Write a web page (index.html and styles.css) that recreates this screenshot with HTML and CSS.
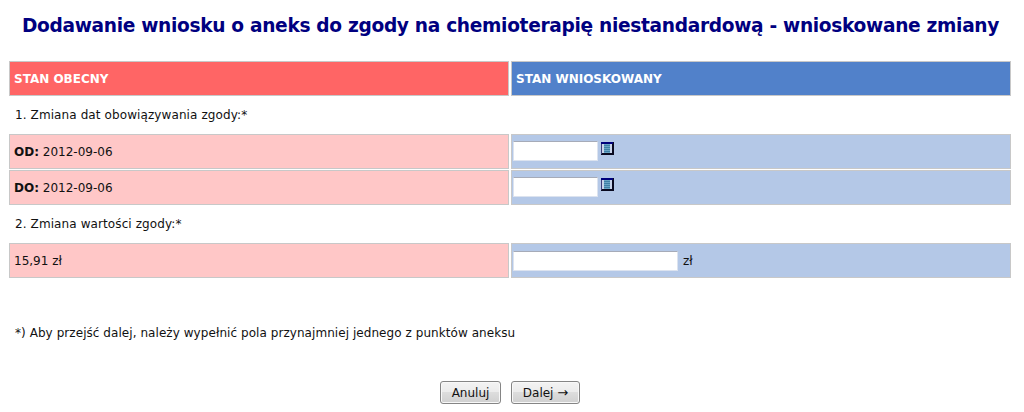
FILE: index.html
```html
<!DOCTYPE html>
<html lang="pl">
<head>
    <meta charset="UTF-8">
    <meta name="viewport" content="width=device-width, initial-scale=1.0">
    <title>Dodawanie wniosku o aneks</title>
    <link rel="stylesheet" href="styles.css">
</head>
<body>
    <h1 class="title"><span>Dodawanie wniosku o aneks do zgody na chemioterapię niestandardową - wnioskowane zmiany</span></h1>

    <form action="#" method="post">
        <table class="changes">
            <tr class="head">
                <th class="current"><span>STAN OBECNY</span></th>
                <th class="requested"><span>STAN WNIOSKOWANY</span></th>
            </tr>
            <tr class="section">
                <td colspan="2"><span>1. Zmiana dat obowiązywania zgody:*</span></td>
            </tr>
            <tr>
                <td class="current"><b>OD:</b> <span>2012-09-06</span></td>
                <td class="requested">
                    <div class="field">
                        <input type="text" class="date" name="date_from">
                        <svg class="calendar" width="13" height="13" viewBox="0 0 13 13" shape-rendering="crispEdges">
                            <rect width="13" height="13" fill="#0a0a20"/>
                            <path d="M0 0H12V2H0z" fill="#00007c"/>
                            <path d="M0 2H1V12H0z" fill="#3c3c78"/>
                            <rect x="1" y="2" width="10" height="9" fill="#c9d4ea"/>
                            <rect x="3" y="2" width="6" height="9" fill="#69a5c4"/>
                            <path d="M3 3H9V4H3zM3 5H9V6H3zM3 7H9V8H3zM3 9H9V10H3z" fill="#3f7fa6"/>
                        </svg>
                    </div>
                </td>
            </tr>
            <tr>
                <td class="current"><b>DO:</b> <span>2012-09-06</span></td>
                <td class="requested">
                    <div class="field">
                        <input type="text" class="date" name="date_to">
                        <svg class="calendar" width="13" height="13" viewBox="0 0 13 13" shape-rendering="crispEdges">
                            <rect width="13" height="13" fill="#0a0a20"/>
                            <path d="M0 0H12V2H0z" fill="#00007c"/>
                            <path d="M0 2H1V12H0z" fill="#3c3c78"/>
                            <rect x="1" y="2" width="10" height="9" fill="#c9d4ea"/>
                            <rect x="3" y="2" width="6" height="9" fill="#69a5c4"/>
                            <path d="M3 3H9V4H3zM3 5H9V6H3zM3 7H9V8H3zM3 9H9V10H3z" fill="#3f7fa6"/>
                        </svg>
                    </div>
                </td>
            </tr>
            <tr class="section">
                <td colspan="2"><span>2. Zmiana wartości zgody:*</span></td>
            </tr>
            <tr>
                <td class="current"><span>15,91 zł</span></td>
                <td class="requested">
                    <div class="field">
                        <input type="text" class="amount" name="amount">
                        <span class="unit">zł</span>
                    </div>
                </td>
            </tr>
        </table>

        <p class="note">*) Aby przejść dalej, należy wypełnić pola przynajmniej jednego z punktów aneksu</p>

        <div class="buttons">
            <button type="button" class="cancel">Anuluj</button>
            <button type="submit" class="next">Dalej <span class="arrow">→</span></button>
        </div>
    </form>
</body>
</html>
```
FILE: styles.css
```css
/* Global styles */
body {
    font-family: Verdana, "DejaVu Sans", sans-serif;
    font-size: 12px;
    margin: 0;
    background-color: #fff;
    color: #111;
}

.title {
    height: 24px;
    margin: 14px 0 22px;
    padding-right: 3px;
    font-size: 18.6px;
    line-height: 24px;
    letter-spacing: -0.32px;
    text-align: center;
    white-space: nowrap;
    color: #000080; /* Navy */
}

/* Table styles */
.changes {
    width: 1006px;
    margin-left: 7px;
    table-layout: fixed;
    border-collapse: separate;
    border-spacing: 2px 1px;
}

.changes th,
.changes td {
    box-sizing: border-box;
    height: 35px;
    padding: 0 5px;
    border: 1px solid #c8c8c8;
    text-align: left;
    line-height: 16px;
    white-space: nowrap;
}

.changes .section td {
    height: 36px;
    border-color: transparent;
    letter-spacing: 0.1px;
}

.changes th {
    padding-left: 4px;
    color: #fff;
}

.head .current {
    background-color: #ff6565;
}

.head .requested {
    background-color: #5181ca;
}

.changes td.current {
    padding-left: 4px;
    background-color: #ffc7c7;
}

.changes td.requested {
    background-color: #b4c8e7;
    padding-left: 1px;
}

/* Form fields */
.field {
    display: flex;
    align-items: center;
}

.field input {
    box-sizing: border-box;
    height: 20px;
    padding: 1px 3px;
    border: 1px solid #dce3ef;
    border-top-color: #a6abb8;
    background-color: #fff;
    font: inherit;
}

.field .date {
    width: 85px;
    margin-bottom: 1px;
}

.field .amount {
    width: 165px;
}

.calendar {
    margin: 0 0 6px 3px;
}

.unit {
    margin-left: 5px;
}

.note {
    margin: 46px 0 0 15px;
    line-height: 16px;
    letter-spacing: 0.06px;
}

/* Buttons */
.buttons {
    display: flex;
    gap: 10px;
    margin: 40px 0 0 440px;
}

.buttons button {
    box-sizing: border-box;
    height: 23px;
    padding: 0;
    border: 1px solid #858585;
    border-radius: 3px;
    background: linear-gradient(#f3f3f3, #ebebeb 50%, #dddddd 50%, #d0d0d0);
    box-shadow: inset 0 0 0 1px #f8f8f8;
    font: inherit;
    color: #111;
}

.buttons .cancel {
    width: 61px;
}

.buttons .next {
    width: 69px;
}

.arrow {
    font-size: 13px;
    line-height: 1;
}
```
